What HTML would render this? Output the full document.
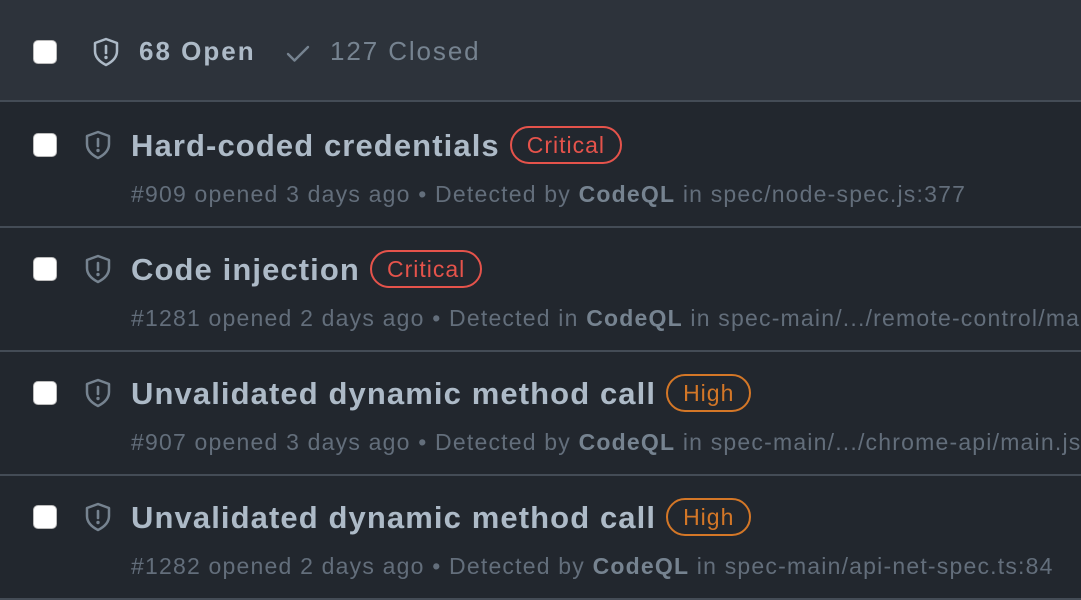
<!DOCTYPE html>
<html><head><style>
*{margin:0;padding:0;box-sizing:border-box}
body{width:1081px;height:600px;overflow:hidden;background:#22272e;font-family:"Liberation Sans",sans-serif}
.hdr{position:absolute;left:0;top:0;width:1081px;height:102px;background:#2d333b;border-bottom:2px solid #444c56}
.cb{position:absolute;width:24px;height:24px;background:#fff;border:1px solid #bbb;border-radius:5px}
.row{position:absolute;left:0;width:1081px;height:124px;border-bottom:2px solid #444c56;white-space:nowrap}
.t{position:absolute;left:131px;top:22px;font-size:31px;font-weight:bold;color:#adbac7;letter-spacing:1.1px}
.b{display:inline-block;vertical-align:3px;margin-left:10px;font-size:23px;font-weight:normal;border:2px solid;border-radius:20px;padding:5px 15px;line-height:24px;letter-spacing:1px}
.crit{color:#e5534b;border-color:#e5534b}
.high{color:#d47727;border-color:#d47727}
.m{position:absolute;left:131px;top:77px;font-size:23px;color:#636e7b;letter-spacing:1.2px}
.m b{color:#768390}
svg.sh{position:absolute}
</style></head><body>
<div class="hdr">
<div class="cb" style="left:33px;top:40px"></div>
<svg class="sh" style="left:90px;top:36px" width="32" height="32" viewBox="0 0 32 32"><path d="M16 3 L27 7 V15 C27 22 22 26 16 29 C10 26 5 22 5 15 V7 Z" fill="none" stroke="#adbac7" stroke-width="2.5" stroke-linejoin="round"/><path d="M16 10 V17" stroke="#adbac7" stroke-width="2.6" stroke-linecap="round"/><circle cx="16" cy="21.5" r="1.7" fill="#adbac7"/></svg>
<div style="position:absolute;left:139px;top:36px;font-size:26px;font-weight:bold;color:#adbac7;letter-spacing:2px">68 Open</div>
<svg style="position:absolute;left:285px;top:40px" width="26" height="26" viewBox="0 0 26 26"><path d="M3 14 L9.5 20.5 L23 7" fill="none" stroke="#768390" stroke-width="2.4" stroke-linecap="round" stroke-linejoin="round"/></svg>
<div style="position:absolute;left:330px;top:36px;font-size:26px;color:#768390;letter-spacing:1.9px">127 Closed</div>
</div>

<div class="row" style="top:104px">
<div class="cb" style="left:33px;top:29px"></div>
<svg class="sh" style="left:82px;top:25px" width="32" height="32" viewBox="0 0 32 32"><path d="M16 3 L27 7 V15 C27 22 22 26 16 29 C10 26 5 22 5 15 V7 Z" fill="none" stroke="#768390" stroke-width="2.5" stroke-linejoin="round"/><path d="M16 10 V17" stroke="#768390" stroke-width="2.6" stroke-linecap="round"/><circle cx="16" cy="21.5" r="1.7" fill="#768390"/></svg>
<div class="t">Hard-coded credentials<span class="b crit">Critical</span></div>
<div class="m">#909 opened 3 days ago • Detected by <b>CodeQL</b> in spec/node-spec.js:377</div>
</div>

<div class="row" style="top:228px">
<div class="cb" style="left:33px;top:29px"></div>
<svg class="sh" style="left:82px;top:25px" width="32" height="32" viewBox="0 0 32 32"><path d="M16 3 L27 7 V15 C27 22 22 26 16 29 C10 26 5 22 5 15 V7 Z" fill="none" stroke="#768390" stroke-width="2.5" stroke-linejoin="round"/><path d="M16 10 V17" stroke="#768390" stroke-width="2.6" stroke-linecap="round"/><circle cx="16" cy="21.5" r="1.7" fill="#768390"/></svg>
<div class="t">Code injection<span class="b crit">Critical</span></div>
<div class="m">#1281 opened 2 days ago • Detected in <b>CodeQL</b> in spec-main/.../remote-control/main.js</div>
</div>

<div class="row" style="top:352px">
<div class="cb" style="left:33px;top:29px"></div>
<svg class="sh" style="left:82px;top:25px" width="32" height="32" viewBox="0 0 32 32"><path d="M16 3 L27 7 V15 C27 22 22 26 16 29 C10 26 5 22 5 15 V7 Z" fill="none" stroke="#768390" stroke-width="2.5" stroke-linejoin="round"/><path d="M16 10 V17" stroke="#768390" stroke-width="2.6" stroke-linecap="round"/><circle cx="16" cy="21.5" r="1.7" fill="#768390"/></svg>
<div class="t">Unvalidated dynamic method call<span class="b high">High</span></div>
<div class="m">#907 opened 3 days ago • Detected by <b>CodeQL</b> in spec-main/.../chrome-api/main.js</div>
</div>

<div class="row" style="top:476px">
<div class="cb" style="left:33px;top:29px"></div>
<svg class="sh" style="left:82px;top:25px" width="32" height="32" viewBox="0 0 32 32"><path d="M16 3 L27 7 V15 C27 22 22 26 16 29 C10 26 5 22 5 15 V7 Z" fill="none" stroke="#768390" stroke-width="2.5" stroke-linejoin="round"/><path d="M16 10 V17" stroke="#768390" stroke-width="2.6" stroke-linecap="round"/><circle cx="16" cy="21.5" r="1.7" fill="#768390"/></svg>
<div class="t">Unvalidated dynamic method call<span class="b high">High</span></div>
<div class="m">#1282 opened 2 days ago • Detected by <b>CodeQL</b> in spec-main/api-net-spec.ts:84</div>
</div>
</body></html>
